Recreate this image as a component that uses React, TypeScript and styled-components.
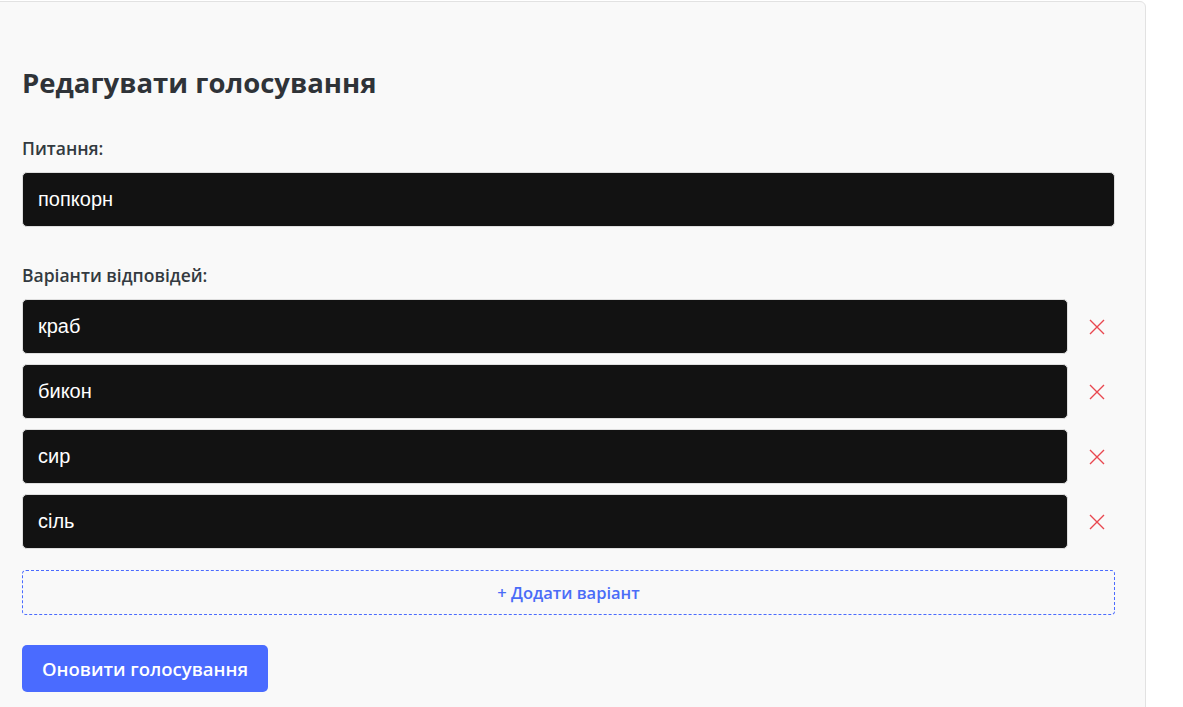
import React from "react";
import styled, { createGlobalStyle } from "styled-components";

const Global = createGlobalStyle`
  html, body { margin: 0; padding: 0; background: #fff; }
  body { font-family: "Open Sans", "Noto Sans", sans-serif; overflow: hidden; }
  * { box-sizing: border-box; }
`;

const Card = styled.div`
  width: 1155px;
  margin: 1px 0 0 -9px;
  padding: 61px 30px 20px 30px;
  background: #f9f9f9;
  border: 1px solid #e2e2e2;
  border-radius: 6px;
  height: 720px;
`;

const Title = styled.h2`
  margin: 0 0 33px 0;
  font-size: 27.5px;
  line-height: 40px;
  font-weight: 700;
  color: #2f3338;
`;

const Label = styled.div`
  font-size: 17.5px;
  font-weight: 600;
  color: #333a40;
  line-height: 24px;
  margin-bottom: 12px;
`;

const Field = styled.input<{ $grow?: boolean }>`
  display: block;
  width: 100%;
  height: 55px;
  padding: 0 15px;
  background: #121212;
  color: #fff;
  border: 1px solid #dedede;
  border-radius: 5px;
  font-family: "Liberation Sans", Arial, sans-serif;
  font-size: 20px;
  outline: none;
  flex: ${(p) => (p.$grow ? "1" : "none")};
`;

const Section = styled.div<{ $mb: number }>`
  margin-bottom: ${(p) => p.$mb}px;
`;

const Options = styled.div`
  display: flex;
  flex-direction: column;
  gap: 10px;
`;

const Row = styled.div`
  display: flex;
  align-items: center;
  gap: 10px;
`;

const Remove = styled.button`
  width: 37px;
  height: 37px;
  border: none;
  background: transparent;
  display: flex;
  align-items: center;
  justify-content: center;
  padding: 0;
  cursor: pointer;
`;

const AddButton = styled.button`
  display: block;
  width: 100%;
  height: 45px;
  margin-top: 21px;
  border: 1px dashed #4a6bff;
  border-radius: 4px;
  background: transparent;
  color: #4a6cf7;
  font-family: "Open Sans", "Noto Sans", sans-serif;
  font-size: 16.5px;
  font-weight: 600;
  cursor: pointer;
`;

const Submit = styled.button`
  display: block;
  margin-top: 30px;
  height: 47px;
  padding: 0 20px;
  border: none;
  border-radius: 5px;
  background: #4a6bff;
  color: #fff;
  font-family: "Open Sans", "Noto Sans", sans-serif;
  font-size: 18.5px;
  font-weight: 600;
  cursor: pointer;
`;

const XIcon = () => (
  <svg width="16" height="16" viewBox="0 0 16 16" fill="none">
    <path d="M1 1L15 15M15 1L1 15" stroke="#e8474f" strokeWidth="1.4" />
  </svg>
);

const options = ["краб", "бикон", "сир", "сіль"];

export default function App() {
  return (
    <>
      <Global />
      <Card>
        <Title>Редагувати голосування</Title>
        <Section $mb={36}>
          <Label>Питання:</Label>
          <Field defaultValue="попкорн" />
        </Section>
        <Label>Варіанти відповідей:</Label>
        <Options>
          {options.map((o) => (
            <Row key={o}>
              <Field $grow defaultValue={o} />
              <Remove aria-label="remove">
                <XIcon />
              </Remove>
            </Row>
          ))}
        </Options>
        <AddButton>+ Додати варіант</AddButton>
        <Submit>Оновити голосування</Submit>
      </Card>
    </>
  );
}
